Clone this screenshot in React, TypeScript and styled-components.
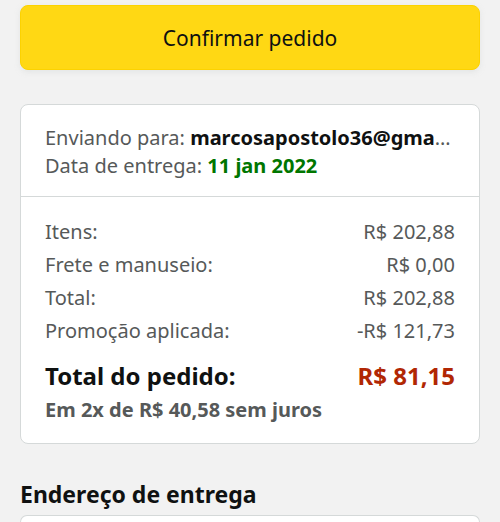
import styled, { createGlobalStyle } from "styled-components"

const Global = createGlobalStyle`
body {
  margin: 0;
  background: #f2f2f2;
  font-family: "Noto Sans", "Open Sans", sans-serif;
  overflow: hidden;
}
`

const Page = styled.div`
padding: 5px 20px 0;
display: flex;
flex-direction: column;
`

const Botao = styled.button`
flex-shrink: 0;
height: 65px;
width: 100%;
border: 1px solid #fcd200;
border-radius: 8px;
background: #ffd814;
box-shadow: 0 2px 5px rgba(213, 217, 217, 0.5);
font-family: inherit;
font-size: 21px;
color: #0f1111;
`

const Card = styled.section`
margin-top: 34px;
background: #fff;
border: 1px solid #d5d9d9;
border-radius: 8px;
`

const Cabecalho = styled.div`
padding: 19px 24px 16px;
border-bottom: 1px solid #d5d9d9;
`

const Linha = styled.div`
font-size: 20px;
line-height: 28px;
color: #565959;
white-space: nowrap;
overflow: hidden;
text-overflow: ellipsis;
`

const Destaque = styled.b<{ $verde?: boolean }>`
font-weight: 700;
color: ${(p) => (p.$verde ? "#007600" : "#0f1111")};
`

const Resumo = styled.div`
padding: 18px 24px 20px;
`

const Item = styled.div`
display: flex;
justify-content: space-between;
font-size: 20px;
line-height: 33px;
color: #565959;
`

const TotalPedido = styled.div`
display: flex;
justify-content: space-between;
font-size: 24px;
font-weight: 700;
line-height: 28px;
color: #0f1111;
margin-top: 15px;
`

const Preco = styled.span`
color: #b12704;
`

const Parcelas = styled.div`
font-size: 20px;
font-weight: 700;
color: #565959;
margin-top: 7px;
line-height: 26px;
`

const Titulo = styled.h2`
margin: 35px 0 0;
font-size: 23px;
line-height: 30px;
font-weight: 700;
color: #0f1111;
`

const Proximo = styled.div`
margin-top: 6px;
height: 6px;
background: #fff;
border: 1px solid #d5d9d9;
border-bottom: none;
border-radius: 8px 8px 0 0;
`

const itens = [
  ["Itens:", "R$ 202,88"],
  ["Frete e manuseio:", "R$ 0,00"],
  ["Total:", "R$ 202,88"],
  ["Promoção aplicada:", "-R$ 121,73"],
]

export default function App() {
  return (
    <>
      <Global />
      <Page>
        <Botao>Confirmar pedido</Botao>
        <Card>
          <Cabecalho>
            <Linha>
              Enviando para: <Destaque>marcosapostolo36@gmail.com</Destaque>
            </Linha>
            <Linha>
              Data de entrega: <Destaque $verde>11 jan 2022</Destaque>
            </Linha>
          </Cabecalho>
          <Resumo>
            {itens.map(([rotulo, valor]) => (
              <Item key={rotulo}>
                <span>{rotulo}</span>
                <span>{valor}</span>
              </Item>
            ))}
            <TotalPedido>
              <span>Total do pedido:</span>
              <Preco>R$ 81,15</Preco>
            </TotalPedido>
            <Parcelas>Em 2x de R$ 40,58 sem juros</Parcelas>
          </Resumo>
        </Card>
        <Titulo>Endereço de entrega</Titulo>
        <Proximo />
      </Page>
    </>
  )
}
